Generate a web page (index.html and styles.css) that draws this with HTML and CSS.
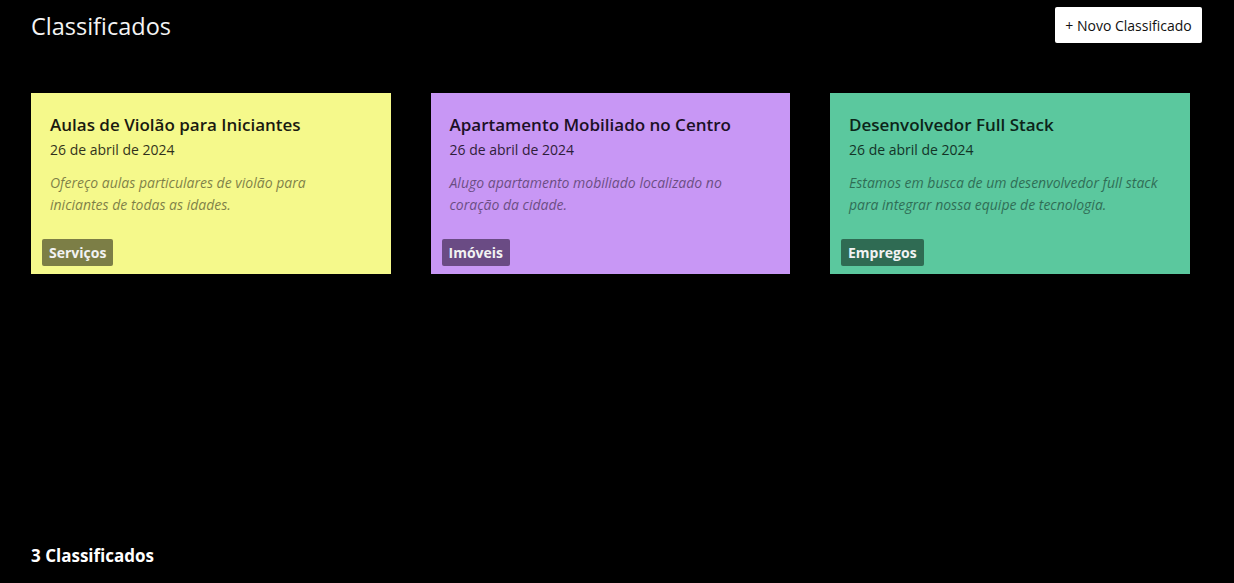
FILE: index.html
```html
<!DOCTYPE html>
<html lang="pt-BR">
<head>
<meta charset="utf-8">
<title>Classificados</title>
<link rel="stylesheet" href="styles.css">
</head>
<body>
<div class="page">
  <header class="topbar">
    <h1 class="page-title">Classificados</h1>
    <button class="new-btn">+ Novo Classificado</button>
  </header>
  <main class="grid">
    <article class="card card-yellow">
      <h2 class="card-title">Aulas de Violão para Iniciantes</h2>
      <div class="card-date">26 de abril de 2024</div>
      <p class="card-desc">Ofereço aulas particulares de violão para iniciantes de todas as idades.</p>
      <span class="badge">Serviços</span>
    </article>
    <article class="card card-purple">
      <h2 class="card-title">Apartamento Mobiliado no Centro</h2>
      <div class="card-date">26 de abril de 2024</div>
      <p class="card-desc">Alugo apartamento mobiliado localizado no coração da cidade.</p>
      <span class="badge">Imóveis</span>
    </article>
    <article class="card card-green">
      <h2 class="card-title">Desenvolvedor Full Stack</h2>
      <div class="card-date">26 de abril de 2024</div>
      <p class="card-desc">Estamos em busca de um desenvolvedor full stack para integrar nossa equipe de tecnologia.</p>
      <span class="badge">Empregos</span>
    </article>
  </main>
  <footer class="footer">3 Classificados</footer>
</div>
</body>
</html>
```
FILE: styles.css
```css
html, body {
  margin: 0;
  padding: 0;
  background: #000;
  height: 100%;
}
body {
  font-family: "Open Sans", "Noto Sans", sans-serif;
  color: #fff;
}
.page {
  height: 583px;
  display: flex;
  flex-direction: column;
  padding: 0 32px 0 31px;
  box-sizing: border-box;
}
.topbar {
  display: flex;
  justify-content: space-between;
  align-items: flex-start;
  padding-top: 7px;
}
.page-title {
  margin: 2px 0 0;
  font-size: 23.5px;
  font-weight: 400;
  line-height: 34px;
  color: #f4f4f4;
}
.new-btn {
  background: #fff;
  color: #111;
  border: none;
  border-radius: 2px;
  height: 36px;
  width: 147px;
  padding: 0;
  font-family: inherit;
  font-size: 14px;
}
.grid {
  display: flex;
  gap: 40px;
  margin-top: 50px;
}
.card {
  width: 359.5px;
  height: 181px;
  box-sizing: border-box;
  padding: 19px 19px 8px;
  display: flex;
  flex-direction: column;
  align-items: flex-start;
}
.card-yellow { background: #f5f98b; color: #1a1a10; }
.card-purple { background: #c897f5; color: #1c1026; }
.card-green { background: #5bc89e; color: #0c2419; }
.card-title {
  margin: 0 0 2px;
  font-size: 17px;
  font-weight: 600;
  line-height: 26px;
}
.card-date {
  font-size: 14px;
  line-height: 20px;
  opacity: 0.9;
}
.card-desc {
  margin: 12px 0 0;
  max-width: 312px;
  font-size: 14px;
  font-style: italic;
  line-height: 22px;
  opacity: 0.55;
}
.badge {
  margin-top: auto;
  margin-left: -8px;
  color: #f2f2f2;
  font-size: 14px;
  font-weight: 700;
  padding: 4px 7px;
  line-height: 19px;
  border-radius: 2px;
}
.card-yellow .badge { background: #7c7e46; }
.card-purple .badge { background: #6a4b84; }
.card-green .badge { background: #2f6b53; }
.footer {
  margin-top: auto;
  padding-bottom: 16px;
  font-size: 17px;
  font-weight: 700;
  line-height: 22px;
}
```
